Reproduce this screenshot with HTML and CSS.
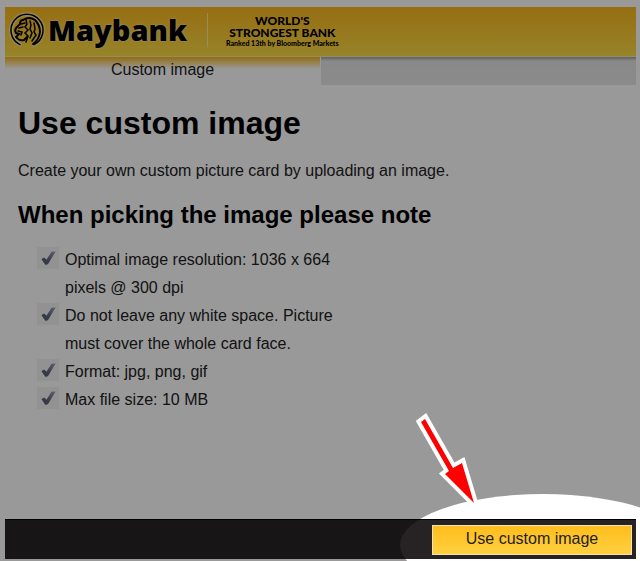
FILE: index.html
```html
<!DOCTYPE html>
<html lang="en">
<head>
    <meta charset="UTF-8">
    <meta name="viewport" content="width=device-width, initial-scale=1.0">
    <title>Maybank - Use custom image</title>
    <link rel="stylesheet" href="styles.css">
</head>
<body>
    <!-- Tick shared by the list items -->
    <svg class="defs" width="0" height="0">
        <defs>
            <linearGradient id="tickFill" x1="1" y1="0" x2="0" y2="1">
                <stop offset="0" stop-color="#9da1b4"/>
                <stop offset="0.6" stop-color="#5c627a"/>
                <stop offset="1" stop-color="#565c74"/>
            </linearGradient>
            <symbol id="tick" viewBox="0 0 22 22">
                <path fill="url(#tickFill)" d="M4.4 12 L7.4 10.4 L9.4 12.8 L14.6 4.8 L18.6 4.6 L11.4 16.6 Q9.6 18.6 8 17.4 Z"/>
            </symbol>
        </defs>
    </svg>

    <div class="page">
        <header class="header">
            <svg class="tiger" viewBox="0 0 36 36" fill="none" stroke="#000" stroke-linecap="round">
                <path stroke="#fbe9a0" stroke-width="4" d="M11 32.6 A16 16 0 1 1 25 32.6"/>
                <path stroke-width="1.5" d="M11 32.6 A16 16 0 1 1 25 32.6"/>
                <path stroke-width="2" d="M14 8 Q20 4 26 8 Q31 13 31 20 Q30 28 24 32"/>
                <path stroke-width="2" d="M14 8 Q11 8 11 12 L8 15 Q5 18 7 21 L10 22 L7 25 Q10 29 15 28 L18 25"/>
                <path stroke-width="1.5" d="M12 12 L16 11 M10 16 L14 15 M9 19 L13 20 L12 23 M17 8 L18 12 L16 15 L19 18 L16 21 L19 24 L17 30"/>
                <path stroke-width="1.5" d="M21 9 L22 13 L21 17 L23 21 L21 26 M25 11 L26 17 L25 20 L27 23 L23 29"/>
            </svg>
            <span class="brand">Maybank</span>
            <div class="award">
                <p class="award-title">WORLD'S<br>STRONGEST BANK</p>
                <p class="award-note">Ranked 13th by Bloomberg Markets</p>
            </div>
        </header>

        <nav class="tabs">
            <a href="#custom" class="tab active">Custom image</a>
            <div class="tab-rest"></div>
        </nav>

        <main class="content" id="custom">
            <h1>Use custom image</h1>
            <p>Create your own custom picture card by uploading an image.</p>
            <h2>When picking the image please note</h2>
            <ul class="notes">
                <li><svg class="tick"><use href="#tick"/></svg><span>Optimal image resolution: 1036 x 664 pixels @ 300 dpi</span></li>
                <li><svg class="tick"><use href="#tick"/></svg><span>Do not leave any white space. Picture must cover the whole card face.</span></li>
                <li><svg class="tick"><use href="#tick"/></svg><span>Format: jpg, png, gif</span></li>
                <li><svg class="tick"><use href="#tick"/></svg><span>Max file size: 10 MB</span></li>
            </ul>
        </main>

        <footer class="footer">
            <button type="button" class="use-button">Use custom image</button>
        </footer>

        <!-- Dims everything except the button -->
        <div class="spotlight"></div>
        <svg class="arrow" viewBox="0 0 66 96">
            <path fill="#f00" stroke="#fff" stroke-width="8" stroke-linejoin="miter" paint-order="stroke" d="M6 9 L10 6 L38 55 L47 50 L59 90 L30 61 L34 58 Z"/>
        </svg>
    </div>
</body>
</html>
```
FILE: styles.css
```css
* {
    box-sizing: border-box;
}
body {
    margin: 0;
    font-family: "Liberation Sans", Arial, sans-serif;
    font-size: 16px;
    color: #222;
    background: #fff;
}
.defs {
    position: absolute;
}
.page {
    position: relative;
    display: flex;
    flex-direction: column;
    min-height: 100vh;
    padding: 7px 4px 2px 5px;
    overflow: hidden;
}

/* Header */
.header {
    display: flex;
    align-items: center;
    height: 50px;
    padding: 0 4px 3px;
    background: linear-gradient(to bottom, #fcb71e, #fcdc46);
    border-bottom: 1px solid #fbe9a0;
}
.tiger {
    width: 36px;
    height: 36px;
}
.brand {
    width: 162px;
    padding-left: 3px;
    font-family: "Open Sans", sans-serif;
    font-size: 29px;
    font-weight: 800;
    line-height: 32px;
    color: #000;
    text-shadow: 0 0 2px #fff;
}
.award {
    height: 34px;
    padding: 2px 0 0 18px;
    border-left: 1px solid #fbe9a0;
    color: #000;
    text-align: center;
    font-family: Lato, sans-serif;
}
.award p {
    margin: 0;
}
.award-title {
    font-size: 12px;
    font-weight: 900;
    line-height: 12px;
}
.award-note {
    font-size: 7px;
    font-weight: 900;
    line-height: 8px;
}

/* Tabs */
.tabs {
    display: flex;
    height: 28px;
}
.tab {
    flex: 1;
    color: #222;
    text-align: center;
    text-decoration: none;
    line-height: 26px;
}
.tab.active {
    background: linear-gradient(to bottom, #f5b41e, #fff 12px);
    border-right: 1px solid #fff;
}
.tab-rest {
    flex: 1;
    background: linear-gradient(to bottom, #a0a0a4, #e4e4e4 4px, #e8e8e8);
}

/* Content */
.content {
    flex: 1;
    padding: 0 13px;
}
.content h1 {
    margin: 20px 0;
    font-size: 32px;
    line-height: 36px;
    color: #000;
}
.content p {
    margin: 0 0 20px;
    line-height: 20px;
}
.content h2 {
    margin: 0 0 17px;
    font-size: 24px;
    line-height: 28px;
    color: #000;
}
.notes {
    width: 324px;
    margin: 0;
    padding: 0 0 0 19px;
    list-style: none;
    line-height: 28px;
}
.notes li {
    display: flex;
    gap: 6px;
}
.tick {
    flex: none;
    width: 22px;
    height: 22px;
    margin-top: 1px;
    background: #f3f3f3;
}

/* Footer */
.footer {
    display: flex;
    justify-content: flex-end;
    padding: 5px 4px 4px;
    background: #272325;
    border-top: 1px solid #000;
}
.use-button {
    width: 200px;
    height: 30px;
    padding: 0 0 2px;
    font-family: inherit;
    font-size: 16px;
    color: #222;
    background: linear-gradient(to bottom, #ffbd1c, #ffd040);
    border: 1px solid #f3e3b4;
    cursor: pointer;
}

/* Overlay */
.spotlight {
    position: absolute;
    right: -46px;
    bottom: -35px;
    width: 286px;
    height: 102px;
    border-radius: 50%;
    box-shadow: 0 0 0 2000px rgba(0, 0, 0, 0.4);
    pointer-events: none;
}
.arrow {
    position: absolute;
    right: 159px;
    bottom: 52px;
    width: 66px;
    height: 96px;
    overflow: visible;
    pointer-events: none;
}
```
